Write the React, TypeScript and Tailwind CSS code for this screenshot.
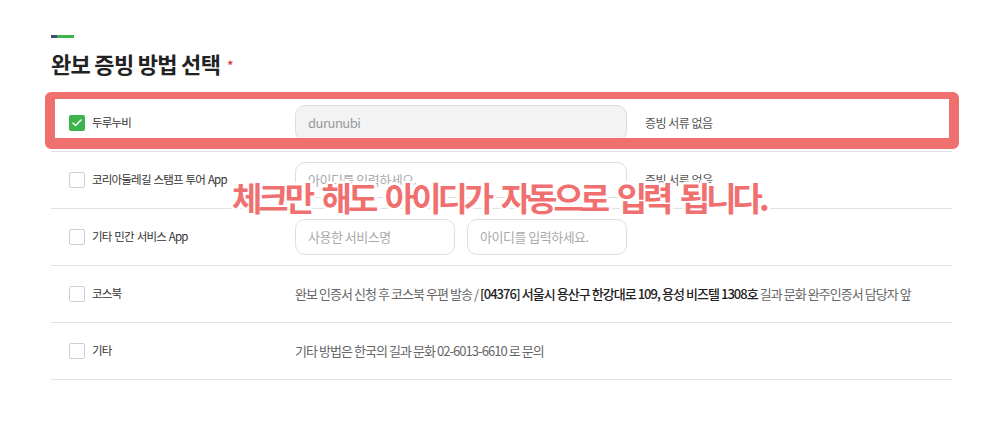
import { Check } from "lucide-react";

type Row = {
  label: string;
  checked?: boolean;
  kind: "single" | "double" | "text";
};

const rows: Row[] = [
  { label: "두루누비", checked: true, kind: "single" },
  { label: "코리아둘레길 스탬프 투어 App", kind: "single" },
  { label: "기타 민간 서비스 App", kind: "double" },
  { label: "코스북", kind: "text" },
  { label: "기타", kind: "text" },
];

function CheckBox({ checked }: { checked?: boolean }) {
  if (checked) {
    return (
      <span className="flex h-4 w-4 shrink-0 items-center justify-center rounded-[2px] bg-[#3cb44b]">
        <Check size={12} strokeWidth={3} className="text-white" />
      </span>
    );
  }
  return <span className="h-4 w-4 shrink-0 rounded-[2px] border border-[#cfcfcf] bg-white" />;
}

function Field({ value, placeholder, disabled, width }: { value?: string; placeholder?: string; disabled?: boolean; width: string }) {
  return (
    <div
      className={`flex h-9 items-center rounded-[10px] border border-[#dedede] px-[12px] text-[13px] tracking-[-0.5px] ${width} ${
        disabled ? "bg-[#f3f3f3] text-[#999]" : "bg-white text-[#aaa]"
      }`}
    >
      {value ?? placeholder}
    </div>
  );
}

export default function App() {
  return (
    <div className="relative h-[422px] w-[1004px] overflow-hidden bg-white font-['Noto_Sans_CJK_KR','Noto_Sans',sans-serif]">
      <div className="pl-[51px] pr-[52px] pt-[35px]">
        <div className="flex h-[3px] w-[23px]">
          <span className="w-[6px] bg-[#3f4d6e]" />
          <span className="flex-1 bg-[#3cb44b]" />
        </div>
        <h2 className="mt-[8px] flex items-center text-[22px] font-bold leading-[30px] tracking-[-0.7px] text-[#222]">
          완보 증빙 방법 선택
          <span className="ml-[7px] mt-[4px] text-[12px] text-[#e03a3a]">*</span>
        </h2>

        <div className="mt-[14px] border-t border-[#999]">
          {rows.map((r, i) => (
            <div key={r.label} className="flex h-[57px] items-center border-b border-[#e2e2e2]">
              <div className="flex w-[244px] shrink-0 items-center gap-[7px] pl-[18px] text-[11.5px] tracking-[-0.8px] text-[#333] [word-spacing:1px]">
                <CheckBox checked={r.checked} />
                <span>{r.label}</span>
              </div>
              {r.kind === "single" && (
                <>
                  {i === 0 ? (
                    <Field value="durunubi" disabled width="w-[332px]" />
                  ) : (
                    <Field placeholder="아이디를 입력하세요." width="w-[332px]" />
                  )}
                  <span className="pl-[18px] text-[12px] tracking-[-0.5px] text-[#555]">증빙 서류 없음</span>
                </>
              )}
              {r.kind === "double" && (
                <div className="flex gap-[12px]">
                  <Field placeholder="사용한 서비스명" width="w-[160px]" />
                  <Field placeholder="아이디를 입력하세요." width="w-[160px]" />
                </div>
              )}
              {r.kind === "text" && i === 3 && (
                <span className="text-[13px] tracking-[-0.95px] text-[#666]">
                  완보 인증서 신청 후 코스북 우편 발송 /{" "}
                  <b className="font-medium text-[#222]">[04376] 서울시 용산구 한강대로 109, 용성 비즈텔 1308호</b> 길과 문화
                  완주인증서 담당자 앞
                </span>
              )}
              {r.kind === "text" && i === 4 && (
                <span className="text-[13px] tracking-[-0.95px] text-[#666]">기타 방법은 한국의 길과 문화 02-6013-6610 로 문의</span>
              )}
            </div>
          ))}
        </div>
      </div>

      {/* annotation overlay */}
      <div className="absolute left-[45px] top-[92px] h-[57px] w-[914px] rounded-[6px] border-x-[10px] border-b-[11px] border-t-[7px] border-[#f06f6f]" />
      <div className="absolute left-[232px] top-[177px] whitespace-nowrap text-[33px] font-bold leading-[40px] tracking-[-4px] text-[#f06f6f] [word-spacing:7px] [text-shadow:2px_2px_0_#fff,-2px_-2px_0_#fff,2px_-2px_0_#fff,-2px_2px_0_#fff,0_3px_0_#fff,0_-3px_0_#fff,3px_0_0_#fff,-3px_0_0_#fff]">
        체크만 해도 아이디가 자동으로 입력 됩니다.
      </div>
    </div>
  );
}
